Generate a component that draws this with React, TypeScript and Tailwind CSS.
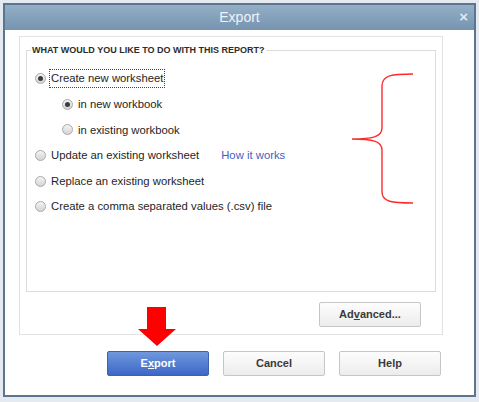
import React from "react";

type Opt = { label: string; checked?: boolean; focus?: boolean; indent?: boolean; link?: string };

const options: Opt[] = [
  { label: "Create new worksheet", checked: true, focus: true },
  { label: "in new workbook", checked: true, indent: true },
  { label: "in existing workbook", indent: true },
  { label: "Update an existing worksheet", link: "How it works" },
  { label: "Replace an existing worksheet" },
  { label: "Create a comma separated values (.csv) file" },
];

function Radio({ checked }: { checked?: boolean }) {
  return (
    <span className="flex h-[11px] w-[11px] items-center justify-center rounded-full border border-[#a9a9a9] bg-gradient-to-b from-[#f4f4f4] to-[#d4d4d4]">
      {checked && <span className="h-[5px] w-[5px] rounded-full bg-[#3c3c3c]" />}
    </span>
  );
}

function GrayButton({ children, className = "" }: { children: React.ReactNode; className?: string }) {
  return (
    <button
      className={`flex h-[25px] w-[102px] items-center justify-center rounded-[2px] border border-[#c6c6c6] bg-gradient-to-b from-[#fdfdfd] to-[#ececec] text-[11px] font-bold text-[#3a3a3a] ${className}`}
    >
      {children}
    </button>
  );
}

export default function App() {
  return (
    <div
      className="relative h-[402px] w-[479px] bg-[#e4eaf0] px-[3px] pt-[3px]"
      style={{ fontFamily: '"Liberation Sans", Arial, sans-serif' }}
    >
      {/* dialog window */}
      <div className="flex h-[394px] w-[473px] flex-col border-2 border-[#5b7590] bg-white">
        <div className="relative flex h-[25px] items-center justify-center bg-gradient-to-b from-[#94afc6] to-[#7694b0]">
          <span className="text-[14px] text-[#eef3f7]">Export</span>
          <span className="absolute right-[6px] top-[4px] text-[15px] font-bold leading-none text-[#dfe7ee]">×</span>
        </div>

        <div className="flex-1 pl-[14px] pt-[6px]">
          {/* report options panel */}
          <div className="flex h-[299px] w-[424px] flex-col border border-[#e2e2e2] px-[6px]">
            <fieldset className="mt-[8px] h-[247px] w-[410px] border border-[#dcdcdc] px-[4px]">
              <legend className="px-[1px] text-[9px] font-bold leading-[10px] text-[#2c2c2c]">
                WHAT WOULD YOU LIKE TO DO WITH THIS REPORT?
              </legend>
              <div className="flex flex-col pl-[4px] pt-[11px]">
                {options.map((o) => (
                  <div key={o.label} className={`flex h-[25.6px] items-center ${o.indent ? "pl-[27px]" : ""}`}>
                    <Radio checked={o.checked} />
                    <span
                      className={`ml-[4px] px-[1px] text-[11.3px] text-[#1e1e1e] ${
                        o.focus ? "outline outline-1 outline-dotted outline-[#444]" : ""
                      }`}
                    >
                      {o.label}
                    </span>
                    {o.link && <span className="ml-[21px] text-[11.3px] text-[#3f5fc4]">{o.link}</span>}
                  </div>
                ))}
              </div>
            </fieldset>
            <div className="flex justify-end pr-[15px] pt-[10px]">
              <GrayButton className="h-[24px] w-[102px]">
                <span>
                  Ad<span className="underline">v</span>anced...
                </span>
              </GrayButton>
            </div>
          </div>

          <div className="flex gap-[14px] pl-[88px] pt-[16px]">
            <button className="flex h-[25px] w-[102px] items-center justify-center rounded-[2px] border border-[#3d62ad] bg-gradient-to-b from-[#6f98dd] to-[#3d67c6] text-[11px] font-bold text-white">
              <span>
                E<span className="underline">x</span>port
              </span>
            </button>
            <GrayButton>Cancel</GrayButton>
            <GrayButton>Help</GrayButton>
          </div>
        </div>
      </div>

      {/* red annotations */}
      <svg className="absolute left-0 top-0" width="479" height="402">
        <path
          d="M413 74 C 392 74 382 75 382 86 L 382 128 C 382 137 372 139 352 139 C 372 139 382 141 382 150 L 382 192 C 382 202 392 203 413 203"
          fill="none"
          stroke="#ff2a2a"
          strokeWidth="1.4"
        />
        <polygon points="147,307 166,307 166,329 176,329 157,346 138,329 147,329" fill="#ff0000" />
      </svg>
    </div>
  );
}
